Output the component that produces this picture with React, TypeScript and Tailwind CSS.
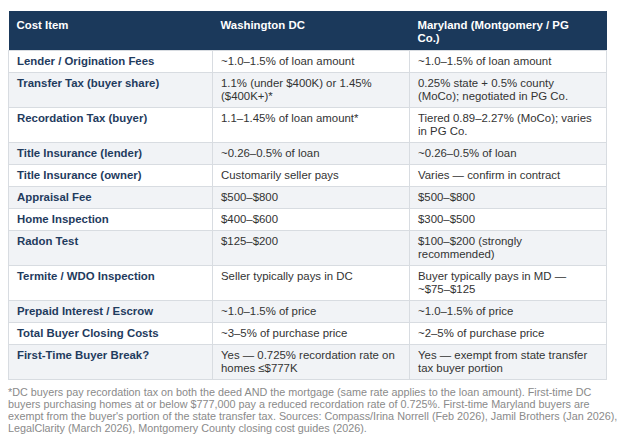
const rows: [string, string, string][] = [
  ["Lender / Origination Fees", "~1.0–1.5% of loan amount", "~1.0–1.5% of loan amount"],
  ["Transfer Tax (buyer share)", "1.1% (under $400K) or 1.45% ($400K+)*", "0.25% state + 0.5% county (MoCo); negotiated in PG Co."],
  ["Recordation Tax (buyer)", "1.1–1.45% of loan amount*", "Tiered 0.89–2.27% (MoCo); varies in PG Co."],
  ["Title Insurance (lender)", "~0.26–0.5% of loan", "~0.26–0.5% of loan"],
  ["Title Insurance (owner)", "Customarily seller pays", "Varies — confirm in contract"],
  ["Appraisal Fee", "$500–$800", "$500–$800"],
  ["Home Inspection", "$400–$600", "$300–$500"],
  ["Radon Test", "$125–$200", "$100–$200 (strongly recommended)"],
  ["Termite / WDO Inspection", "Seller typically pays in DC", "Buyer typically pays in MD — ~$75–$125"],
  ["Prepaid Interest / Escrow", "~1.0–1.5% of price", "~1.0–1.5% of price"],
  ["Total Buyer Closing Costs", "~3–5% of purchase price", "~2–5% of purchase price"],
  ["First-Time Buyer Break?", "Yes — 0.725% recordation rate on homes ≤$777K", "Yes — exempt from state transfer tax buyer portion"],
];

export default function App() {
  return (
    <div className="w-[624px] h-[436px] bg-white pl-2 pt-[11px] font-['Liberation_Sans',Arial,sans-serif]">
      <table className="w-[598px] border-collapse table-fixed text-[11.4px] leading-[13px]">
        <colgroup>
          <col className="w-[204px]" />
          <col className="w-[197px]" />
          <col className="w-[197px]" />
        </colgroup>
        <thead>
          <tr className="bg-[#1b395b] text-white">
            <th className="h-[39px] pl-2 pr-[13px] pt-[8px] pb-1 text-left align-top font-bold">Cost Item</th>
            <th className="pl-2 pr-[13px] pt-[8px] pb-1 text-left align-top font-bold">Washington DC</th>
            <th className="pl-2 pr-[13px] pt-[8px] pb-1 text-left align-top font-bold">Maryland (Montgomery / PG Co.)</th>
          </tr>
        </thead>
        <tbody>
          {rows.map((r, i) => (
            <tr key={r[0]} className={i % 2 === 1 ? "bg-[#f1f3f6]" : "bg-white"}>
              <td className="border border-[#d8dce1] pl-2 pr-[13px] pt-[4px] pb-[4px] align-top font-bold text-[#1f3b5e]">{r[0]}</td>
              <td className="border border-[#d8dce1] pl-2 pr-[13px] pt-[4px] pb-[4px] align-top text-[#333]">{r[1]}</td>
              <td className="border border-[#d8dce1] pl-2 pr-[13px] pt-[4px] pb-[4px] align-top text-[#333]">{r[2]}</td>
            </tr>
          ))}
        </tbody>
      </table>
      <p className="mt-[6px] w-[616px] text-[10.8px] leading-[12.2px] text-[#8a8a8a]">
        *DC buyers pay recordation tax on both the deed AND the mortgage (same rate applies to the loan amount). First-time DC buyers purchasing homes at or below $777,000 pay a reduced recordation rate of 0.725%. First-time Maryland buyers are exempt from the buyer's portion of the state transfer tax. Sources: Compass/Irina Norrell (Feb 2026), Jamil Brothers (Jan 2026), LegalClarity (March 2026), Montgomery County closing cost guides (2026).
      </p>
    </div>
  );
}
